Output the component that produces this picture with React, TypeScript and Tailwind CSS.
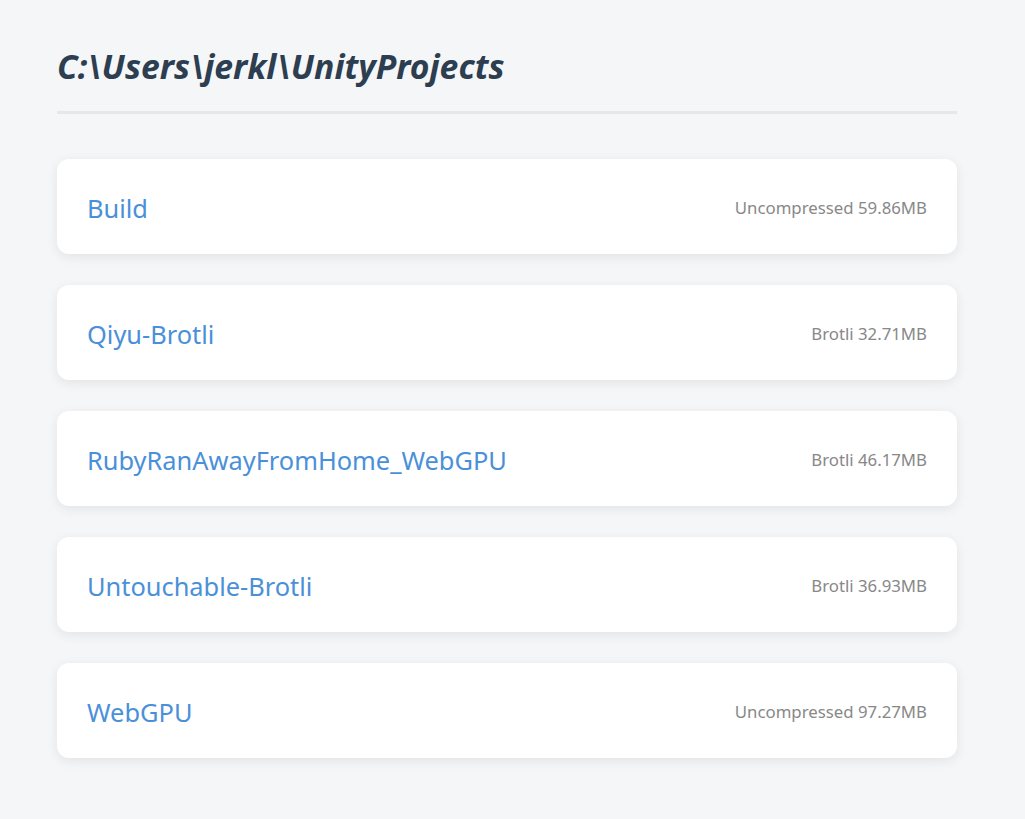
const builds = [
  { name: "Build", info: "Uncompressed 59.86MB" },
  { name: "Qiyu-Brotli", info: "Brotli 32.71MB" },
  { name: "RubyRanAwayFromHome_WebGPU", info: "Brotli 46.17MB" },
  { name: "Untouchable-Brotli", info: "Brotli 36.93MB" },
  { name: "WebGPU", info: "Uncompressed 97.27MB" },
];

export default function App() {
  return (
    <div className="min-h-screen w-full bg-[#f5f6f8] font-['Segoe_UI','Noto_Sans',sans-serif]">
      <div className="ml-[57px] w-[900px] pt-[44px] pb-[60px]">
        {/* header */}
        <h1 className="border-b-[3px] border-[#e5e7eb] pb-[23px] text-[33.7px] leading-[44px] font-bold italic text-[#2c3e50]">
          C:\Users\jerkl\UnityProjects
        </h1>

        {/* build list */}
        <div className="mt-[45px] flex flex-col gap-[31px]">
          {builds.map((b) => (
            <div
              key={b.name}
              className="flex h-[95px] items-center justify-between rounded-[12px] bg-white px-[30px] pt-[3px] shadow-[0_3px_12px_rgba(0,0,0,0.08)]"
            >
              <a href="#" className="pt-[1px] text-[25.4px] text-[#4a90d9]">
                {b.name}
              </a>
              <span className="text-[16.8px] text-[#888888]">{b.info}</span>
            </div>
          ))}
        </div>
      </div>
    </div>
  );
}
